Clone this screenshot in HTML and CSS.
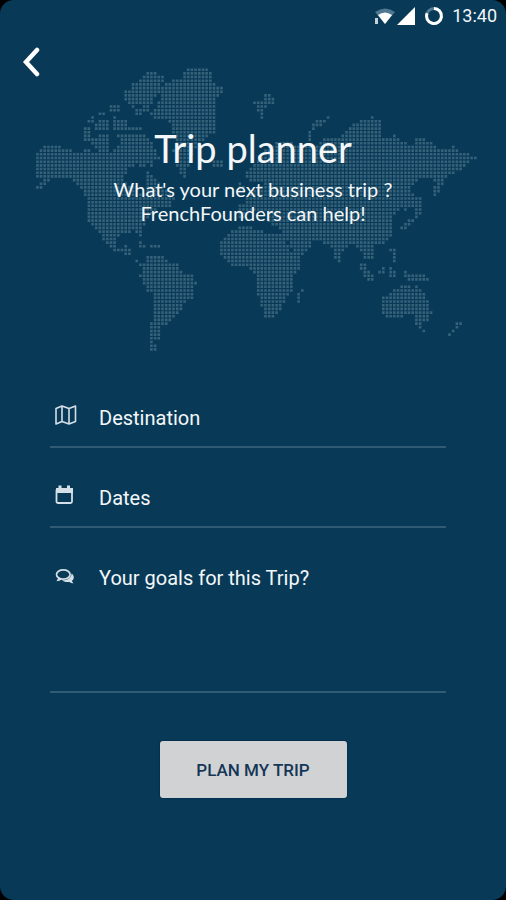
FILE: index.html
```html
<!DOCTYPE html>
<html lang="en">
<head>
<meta charset="utf-8">
<meta name="viewport" content="width=device-width, initial-scale=1">
<title>Trip planner</title>
<link rel="stylesheet" href="styles.css">
</head>
<body>
<div class="screen">
  <div class="status">
    <svg class="status-wifi" viewBox="0 0 22 18" aria-hidden="true"><path d="M1 5Q11-2 21 5L11 17z" fill="#507890"/><path d="M4 8Q11 3 18 8L11 17z" fill="#fff"/><path d="M1 11h3v6H1z" fill="#c4d2dc"/></svg>
    <svg class="status-signal" viewBox="0 0 18 18" aria-hidden="true"><path d="M18 0v18H0z" fill="#fff"/></svg>
    <svg class="status-ring" viewBox="0 0 20 20" aria-hidden="true"><circle cx="10" cy="10" r="7.5" fill="none" stroke="#547b92" stroke-width="3"/><path d="M10 2.5A7.5 7.5 0 1 1 3 7.200" fill="none" stroke="#fff" stroke-width="3"/></svg>
    <span class="clock">13:40</span>
  </div>
  <header class="hero">
    <svg class="map" id="map" viewBox="0 0 506 300" aria-hidden="true"></svg>
    <div class="hero-content">
      <button class="back" type="button" aria-label="Back"><svg viewBox="0 0 18 30" aria-hidden="true"><path d="M15 3 4 15 15 27" fill="none" stroke="#fff" stroke-width="4.500" stroke-linecap="round"/></svg></button>
      <h1>Trip planner</h1>
      <p>What's your next business trip ?<br>FrenchFounders can help!</p>
    </div>
  </header>
  <form class="form">
    <div class="field">
      <label for="destination" aria-label="Destination"><svg viewBox="0 0 24 22" aria-hidden="true"><path d="M2 4.500 8 2l7 2.500L21.500 2v15.500L15 20l-7-2.500L2 20zM8 2v15.500M15 4.500V20" fill="none" stroke="#d4dfe8" stroke-width="1.600" stroke-linejoin="round"/></svg></label>
      <input id="destination" type="text" placeholder="Destination">
    </div>
    <div class="field">
      <label for="dates" aria-label="Dates"><svg viewBox="0 0 24 22" aria-hidden="true"><rect x="2.500" y="5" width="15.500" height="14" rx="1.500" fill="none" stroke="#d4dfe8" stroke-width="1.800"/><path d="M2 4h17v5H2zM4.500 1.500h3V5h-3zM13 1.500h3V5h-3z" fill="#d4dfe8"/></svg></label>
      <input id="dates" type="text" placeholder="Dates">
    </div>
    <div class="field field-goals">
      <label for="goals" aria-label="Your goals for this Trip?"><svg viewBox="0 -3 24 22" aria-hidden="true"><path d="M17.500 6.500c3 2 3 5.500.5 7.200.1 1 .7 1.700 1.700 2.600-2 0-3.200-.5-4.300-1.400-3.300.5-5.800-.2-7.400-1.600 5 0 9.300-2 9.500-6.800z" fill="#d4dfe8"/><ellipse cx="9.300" cy="7.500" rx="6.800" ry="4.600" fill="none" stroke="#d4dfe8" stroke-width="1.700"/><path d="M4.500 10.500 2.500 14.300c2 0 4-.7 5.500-2.200z" fill="#d4dfe8"/></svg></label>
      <textarea id="goals" placeholder="Your goals for this Trip?"></textarea>
    </div>
    <button class="submit" type="submit">PLAN MY TRIP</button>
  </form>
</div>
<script src="map.js"></script>
</body>
</html>
```
FILE: styles.css
```css
* {
  box-sizing: border-box;
}

body {
  margin: 0;
  background: #000;
  font-family: Roboto, "Liberation Sans", sans-serif;
  color: #f4f7f9;
}

.screen {
  min-height: 100vh;
  background: #083a58;
  border-radius: 14px;
}

.status {
  display: flex;
  align-items: center;
  justify-content: flex-end;
  height: 32px;
  padding-right: 9px;
}

.status-wifi {
  width: 22px;
  height: 18px;
}

.status-signal {
  width: 18px;
  height: 18px;
  margin-left: 1px;
}

.status-ring {
  width: 20px;
  height: 20px;
  margin: 0 8px 0 9px;
}

.clock {
  font-size: 18px;
  line-height: 20px;
}

.hero {
  display: grid;
}

.map,
.hero-content {
  grid-area: 1 / 1;
}

.map {
  width: 100%;
  margin-top: 28px;
  fill: #356179;
}

.hero-content {
  padding-top: 14px;
  text-align: center;
  font-family: Lato, sans-serif;
}

.back {
  display: block;
  width: 40px;
  height: 32px;
  margin: 0 0 0 12px;
  padding: 0 10px;
  border: 0;
  background: none;
}

.back svg {
  display: block;
  width: 18px;
  height: 30px;
}

h1 {
  margin: 47px 0 0;
  font-size: 38px;
  line-height: 46px;
  font-weight: 400;
}

.hero p {
  margin: 6px 0 0;
  font-size: 20px;
  line-height: 24px;
}

.form {
  display: flex;
  flex-direction: column;
  padding: 8px 60px 40px 50px;
}

.field {
  display: flex;
  align-items: flex-start;
  height: 80px;
  padding-top: 35px;
  border-bottom: 2px solid #315b75;
}

.field label {
  flex: none;
  width: 49px;
  padding: 1px 0 0 4px;
}

.field svg {
  display: block;
  width: 24px;
  height: 22px;
}

.field input,
.field textarea {
  flex: 1;
  min-width: 0;
  height: 30px;
  padding: 0;
  border: 0;
  outline: 0;
  resize: none;
  background: none;
  color: inherit;
  font: 20px/30px Roboto, "Liberation Sans", sans-serif;
}

.field ::placeholder {
  color: inherit;
  opacity: 1;
}

.field-goals {
  height: 165px;
}

.field-goals textarea {
  height: 110px;
}

.submit {
  align-self: center;
  width: 187px;
  height: 57px;
  margin-top: 48px;
  margin-left: 10px;
  border: 0;
  border-radius: 3px;
  background: #d1d2d3;
  box-shadow: 0 0 2px #001746;
  color: #143657;
  font: 500 17px/20px Roboto, "Liberation Sans", sans-serif;
}
```
FILE: map.js
```js
// Coastlines as x,y pairs; every grid point inside a shape becomes a dot.
const land = [
  // North America
  "35,153 47,143 63,147 77,152 88,150 100,154 112,152 119,146 128,141 131,134 140,133 149,138 154,147 159,158 151,160 153,166 147,164 143,169 137,165 128,169 124,176 126,183 137,187 143,195 146,187 144,178 146,172 153,174 160,183 168,191 175,199 170,206 160,208 155,213 147,220 142,229 144,239 138,235 134,231 123,234 118,238 117,247 122,249 126,246 130,250 135,257 141,262 147,265 140,266 133,257 122,253 112,249 104,240 97,231 88,220 86,204 85,196 79,187 71,180 61,176 52,179 45,186 38,190 35,187 44,181 36,176 35,166 31,163 38,160",
  // Arctic islands
  "130,82 138,83 147,71 164,75 163,83 154,89 157,96 150,105 140,103 135,108 122,99 124,91 132,89",
  "134,109 148,105 148,113 134,116", "110,106 121,104 119,111 110,111",
  "98,112 107,111 106,115 98,115", "88,119 95,114 95,122 88,122",
  "95,122 110,119 110,129 96,130", "85,128 92,128 92,142 85,142",
  "92,137 108,134 111,149 103,153 92,145", "114,117 129,119 129,125 141,125 141,129 114,131",
  "118,133 130,133 128,148 119,145",
  // Greenland
  "148,114 158,106 160,97 155,89 164,84 173,79 183,78 184,70 193,67 206,67 214,76 213,84 225,87 224,93 215,97 217,112 217,130 209,137 200,145 193,153 189,163 187,178 180,175 176,164 173,151 175,140 171,125 164,119 154,121 153,114",
  // Iceland and Svalbard
  "211,160 224,160 224,168 214,167",
  "264,92 272,93 275,103 267,105 264,113 257,113 257,106 252,104 252,100 265,101", "260,113 264,113 264,121 260,121",
  "307,140 308,132 314,123 320,119 329,117 328,121 319,126 313,132 310,140",
  // Europe, Asia
  "247,170 257,162 262,154 270,146 280,141 292,143 304,147 318,144 326,136 339,138 346,133 347,126 358,124 358,118 369,118 370,113 374,118 379,119 382,128 383,136 393,136 395,131 400,142 413,144 417,136 425,139 435,144 440,149 451,150 453,146 459,152 470,153 476,158 467,163 459,171 452,175 444,179 441,189 434,196 433,188 438,181 426,179 413,181 412,191 417,197 420,202 413,206 405,210 400,207 397,216 390,217 393,225 392,237 383,243 376,245 375,253 372,261 365,258 361,250 354,243 347,248 342,254 341,263 336,259 332,248 326,244 318,239 309,240 313,246 303,254 294,254 287,241 283,230 274,227 265,220 268,212 258,213 250,210 246,219 237,220 237,207 246,202 248,194 259,188 264,181 259,180 253,183 247,180",
  "237,184 243,182 246,194 238,195",
  // Africa
  "230,232 240,226 253,226 255,230 267,232 283,232 287,243 292,254 303,258 301,266 292,276 292,291 285,300 282,309 273,317 265,317 260,304 257,292 258,281 252,270 248,266 230,266 221,257 218,250 221,240",
  "301,285 303,288 299,303 296,302 298,292",
  // South America and the Caribbean
  "146,257 166,257 169,264 178,264 181,271 192,275 195,280 200,280 193,289 193,300 184,302 180,311 171,323 163,326 159,334 160,339 154,341 158,353 154,353 149,346 150,331 153,311 154,295 147,291 140,277 142,268 147,265",
  "138,242 146,243 146,247 138,247", "149,246 161,246 161,250 149,250",
  // Japan and the Philippines
  "418,197 422,197 422,214 413,224 401,231 401,227 414,216", "390,247 394,247 397,264 392,263",
  // Indonesia and New Guinea
  "357,263 364,261 369,270 376,280 382,281 369,283 362,272", "376,270 381,269 385,263 386,274 377,276",
  "390,268 394,266 395,279 390,279", "404,271 410,274 423,275 430,277 428,283 414,283 405,278",
  // Australia, Tasmania, New Zealand
  "383,297 390,292 395,288 401,286 411,286 412,291 416,285 420,289 425,295 429,302 432,313 428,321 417,321 413,315 398,317 384,318 380,306",
  "414,321 421,323 426,331 421,331", "454,318 461,323 460,329 457,329", "447,335 453,330 455,333 449,337"
].map(s => s.split(" ").map(p => p.split(",").map(Number)));

function inside(x, y, shape) {
  let hit = false;
  for (let i = 0, j = shape.length - 1; i < shape.length; j = i++) {
    const [ax, ay] = shape[i];
    const [bx, by] = shape[j];
    if ((ay > y) !== (by > y) && x < (bx - ax) * (y - ay) / (by - ay) + ax) hit = !hit;
  }
  return hit;
}

const step = 3.68;
let dots = "";
for (let y = 66; y < 358; y += step) {
  for (let x = 30; x < 480; x += step) {
    if (land.some(shape => inside(x, y, shape))) {
      dots += `M${(x - 1.3).toFixed(1)} ${(y - 61.3).toFixed(1)}h2.6v2.6h-2.6z`;
    }
  }
}
const path = document.createElementNS("http://www.w3.org/2000/svg", "path");
path.setAttribute("d", dots);
document.getElementById("map").append(path);
```
